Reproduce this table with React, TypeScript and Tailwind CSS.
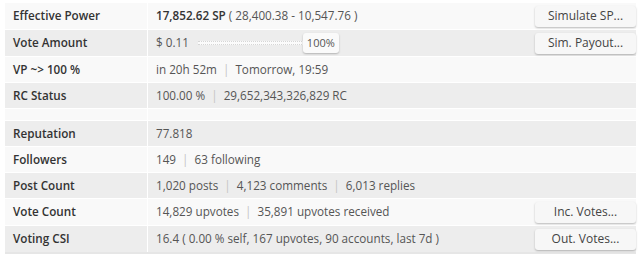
import React from 'react'

type Row = {
  label: string
  value: React.ReactNode
  button?: string
  shade: 'light' | 'dark'
  tall?: boolean
}

const Sep = () => <span className="mx-[3px] text-[#c4c4c4]">|</span>

function Slider() {
  return (
    <div className="ml-[9px] flex items-center">
      <div className="h-[4px] w-[106px] border-y border-dotted border-[#d6d6d6] bg-[#fbfbfb]" />
      <div className="-ml-[1px] flex h-[20px] w-[36px] items-center justify-center rounded-[3px] bg-[#fafafa] text-[11px] text-[#555] shadow-[0_1px_2px_rgba(0,0,0,0.25)]">
        100%
      </div>
    </div>
  )
}

const topRows: Row[] = [
  {
    label: 'Effective Power',
    shade: 'light',
    tall: true,
    button: 'Simulate SP...',
    value: (
      <>
        <span className="font-semibold text-[#333]">17,852.62 SP</span>
        <span>&nbsp;( 28,400.38 - 10,547.76 )</span>
      </>
    ),
  },
  {
    label: 'Vote Amount',
    shade: 'dark',
    tall: true,
    button: 'Sim. Payout...',
    value: (
      <>
        <span>$ 0.11</span>
        <Slider />
      </>
    ),
  },
  {
    label: 'VP ~> 100 %',
    shade: 'light',
    value: (
      <>
        in 20h 52m <Sep /> Tomorrow, 19:59
      </>
    ),
  },
  {
    label: 'RC Status',
    shade: 'dark',
    value: (
      <>
        100.00 % <Sep /> 29,652,343,326,829 RC
      </>
    ),
  },
]

const bottomRows: Row[] = [
  { label: 'Reputation', shade: 'dark', value: '77.818' },
  {
    label: 'Followers',
    shade: 'light',
    value: (
      <>
        149 <Sep /> 63 following
      </>
    ),
  },
  {
    label: 'Post Count',
    shade: 'dark',
    value: (
      <>
        1,020 posts <Sep /> 4,123 comments <Sep /> 6,013 replies
      </>
    ),
  },
  {
    label: 'Vote Count',
    shade: 'light',
    tall: true,
    button: 'Inc. Votes...',
    value: (
      <>
        14,829 upvotes <Sep /> 35,891 upvotes received
      </>
    ),
  },
  {
    label: 'Voting CSI',
    shade: 'dark',
    tall: true,
    button: 'Out. Votes...',
    value: '16.4 ( 0.00 % self, 167 upvotes, 90 accounts, last 7d )',
  },
]

function StatRow({ row }: { row: Row }) {
  const bg = row.shade === 'dark' ? 'bg-[#ededed]' : 'bg-[#f9f9f9]'
  return (
    <div className={`grid grid-cols-[142px_1fr] gap-px ${row.tall ? 'h-[26px]' : 'h-[25px]'}`}>
      <div className={`${bg} flex items-center pl-[8px] font-semibold text-[#333]`}>{row.label}</div>
      <div className={`${bg} flex items-center justify-between pl-[8px] pr-0 text-[#555]`}>
        <div className="flex items-center whitespace-pre">{row.value}</div>
        {row.button && (
          <button className="h-[21px] w-[101px] rounded-[3px] bg-[#f7f7f7] text-[12px] text-[#444] shadow-[0_1px_2px_rgba(0,0,0,0.25)]">
            {row.button}
          </button>
        )}
      </div>
    </div>
  )
}

export default function App() {
  return (
    <div className="h-[258px] w-[640px] bg-white pl-[5px] pr-[4px] pt-[3px] font-['Open_Sans',sans-serif] text-[11.7px]">
      <div className="flex flex-col gap-px border-b-2 border-[#e6e6e6] bg-white">
        {topRows.map((r) => (
          <StatRow key={r.label} row={r} />
        ))}
        <div className="grid h-[11px] grid-cols-[142px_1fr] gap-px">
          <div className="bg-[#f9f9f9]" />
          <div className="bg-[#f9f9f9]" />
        </div>
        {bottomRows.map((r) => (
          <StatRow key={r.label} row={r} />
        ))}
      </div>
    </div>
  )
}
